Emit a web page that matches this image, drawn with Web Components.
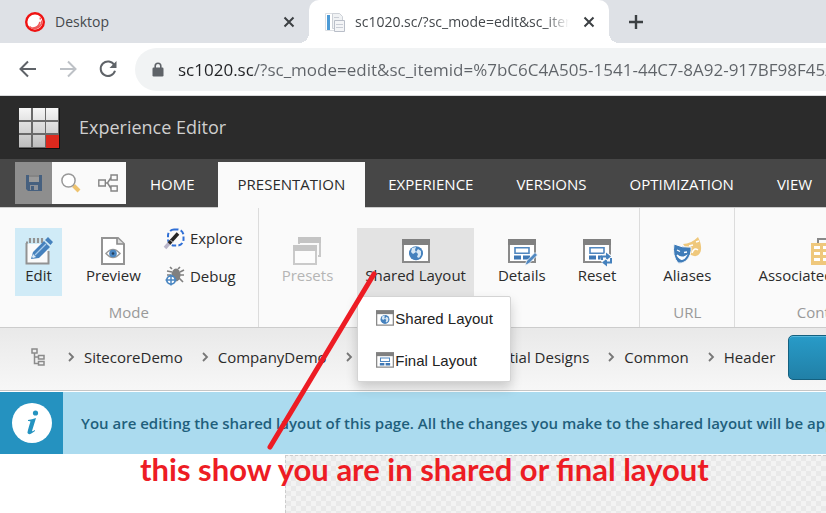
<!DOCTYPE html>
<html lang="en">
<head>
<meta charset="utf-8">
<title>Experience Editor</title>
<style>
  html, body { margin: 0; }
  body { font-family: "Open Sans", "Noto Sans", sans-serif; font-size: 15px; color: #2b2b2b; background: #fff; }
</style>
</head>
<body>
<editor-window></editor-window>

<script>
const define = (name, html, setup) => {
  const template = document.createElement('template');
  template.innerHTML = html;
  customElements.define(name, class extends HTMLElement {
    connectedCallback() {
      if (this.shadowRoot) return;
      this.attachShadow({ mode: 'open' }).append(template.content.cloneNode(true));
      if (setup) setup(this, this.shadowRoot);
    }
  });
};

const windowFrame = '<path fill="#fff" stroke="#8a8a8a" stroke-width="2" d="M1 3h26v22H1z"/><path fill="#808080" d="M0 2h28v6H0z"/>';
const layoutBlocks = '<path fill="#fff" stroke="#4f86bf" stroke-width="1.6" d="M7 10.8h14v5.4H7z"/><path fill="#3f78b5" d="M6 18.5h7v4H6zm9 0h7v4h-7z"/>';

const ICONS = {
  sitecore: ['0 0 20 20', '<circle cx="10" cy="10" r="8.800" fill="#fff" stroke="#ef1212" stroke-width="2.400"/><path d="M16.600 8.500a6.800 6.800 0 0 1-9.200 7.400c4 .3 7-2.400 7.500-6M15.300 5.500v2M4.500 14.500c1 1 2 1.800 4 1.900" fill="none" stroke="#f05a5a" stroke-width="1.500"/>'],
  pages: ['0 0 20 20', '<path fill="#fff" stroke="#dcdfe3" d="M.5 1.500h14v17H.5z"/><path fill="#4d9bd6" d="M2 3h3v15H2z"/><path fill="#f0f2f4" stroke="#cdd1d7" d="M7.500 1.500h7l3 3v12h-10z"/><path fill="#f4f5f7" stroke="#b9bec8" d="M9.500 8.500h10v11h-10z"/><path stroke="#c9cdd5" d="M9 5.500h5M11 12.500h7M11 15.500h7"/>'],
  close: ['0 0 12 12', '<path d="M1.500 1.500l9 9m0-9l-9 9" stroke="#3c4043" stroke-width="2" fill="none"/>'],
  plus: ['0 0 16 16', '<path d="M8 1v14M1 8h14" stroke="#3c4043" stroke-width="2.400" fill="none"/>'],
  back: ['0 0 18 18', '<path d="M17 9H2m7-7.500L1.500 9 9 16.500" stroke="#5f6368" stroke-width="2" fill="none"/>'],
  forward: ['0 0 18 18', '<path d="M1 9h15M9 1.500L16.500 9 9 16.500" stroke="#bdc1c6" stroke-width="2" fill="none"/>'],
  reload: ['0 0 18 18', '<path d="M15.300 5A7.300 7.300 0 1 0 16 10.800" stroke="#5f6368" stroke-width="2" fill="none"/><path d="M17.500 1v7h-7z" fill="#5f6368"/>'],
  lock: ['0 0 12 15', '<path d="M3.200 6V4a2.800 2.800 0 0 1 5.600 0v2" stroke="#5f6368" stroke-width="1.600" fill="none"/><rect x=".5" y="5.500" width="11" height="9" rx="1.200" fill="#5f6368"/>'],
  logo: ['0 0 42 42', '<defs><linearGradient id="g" x2="0" y2="1"><stop stop-color="#f6f6f6"/><stop offset="1" stop-color="#bdbdbd"/></linearGradient></defs><path fill="#111" d="M1 1h41v41H1z"/><path fill="#6a6a6a" d="M1 1h40v40H1z"/><path fill="url(#g)" d="M1 1h12v12H1zm14 0h12v12H15zm13 0h12v12H28zM1 15h12v11H1zm14 0h12v11H15zm13 0h12v11H28zM1 28h12v12H1zm14 0h12v12H15z"/><path fill="#dc291e" d="M28 28h13v13H28z"/>'],
  save: ['0 0 16 16', '<path fill="#46607f" d="M1 0h2v7h10V0h3v16H2l-2-2V0z"/><path fill="#9a9a9a" d="M3 0h10v7H3z"/><path stroke="#6e6e6e" d="M3 1h10"/><path fill="#8e9299" d="M4 10h8v5H4z"/><path fill="#46607f" d="M5 11h3v4H5z"/>'],
  search: ['0 0 20 20', '<path d="M12.500 12.500l5.500 5.500" stroke="#eec36f" stroke-width="4"/><circle cx="7.500" cy="7.500" r="6.600" fill="#fff" stroke="#999" stroke-width="1.500"/>'],
  flow: ['0 0 20 18', '<path d="M.8 6h6.500v6H.8zM13 1h6.200v5H13zm0 11h6.200v5H13zM7.500 9h2L13 3.500M9.500 9l3.500 5.500" fill="none" stroke="#858585" stroke-width="1.400"/>'],
  edit: ['0 0 28 28', '<path fill="#fafafa" d="M2 7h21v19H2z"/><path d="M1.500 6v20.500h22V14" stroke="#929292" stroke-width="2" fill="none"/><path d="M1 5.500h2" stroke="#929292" stroke-width="2"/><path d="M5 1v5m4-5v5m4-5v5m4-5v5" stroke="#929292" stroke-width="2.200"/><path fill="#4581bd" d="M6 22l2-7L19 4l6 6-11 11zM20 3l3-3 5 5-2.500 3z"/><path d="M10 18L21 7" stroke="#a9cbea" stroke-width="1.200"/><path fill="#dcebf7" d="M8 17l3 3-3 1-1-1z"/>'],
  preview: ['0 0 28 28', '<path d="M3 1h16l6 6v20H3z" fill="#fff" stroke="#949494" stroke-width="2"/><path d="M18 1v6h7" fill="#ddd" stroke="#8a8a8a" stroke-width="1.600"/><path d="M7 16.500q7-8 14 0-7 8-14 0z" fill="#fff" stroke="#999" stroke-width="1.500"/><circle cx="14" cy="16.500" r="3.800" fill="#4b87c2"/><circle cx="14" cy="16.500" r="1.300" fill="#263f5b"/>'],
  explore: ['0 0 20 20', '<rect x="3" y="1.500" width="15.500" height="16" rx="6" fill="none" stroke="#2f6fd6" stroke-width="2" stroke-dasharray="4.500 2.300"/><path d="M0 20L7 12" stroke="#b9b5c9" stroke-width="3.500"/><path d="M4 15.500L13 5.500" stroke="#252525" stroke-width="3.500"/><path d="M5.500 12l3 3" stroke="#ddd" stroke-width="1"/>'],
  debug: ['0 0 20 20', '<ellipse cx="11" cy="9" rx="4.500" ry="6.500" fill="#808080"/><path d="M7 3L5 1m8 2l2-2M7 6L2 5m13 1l4-2M15 9h4m-5 3l4 4M6 9H2" stroke="#808080" stroke-width="1.700"/><circle cx="6" cy="14" r="4.200" fill="#fff" stroke="#4b87c2" stroke-width="1.800"/><path d="M6 8.500v11M.5 14h11" stroke="#4b87c2" stroke-width="1.500"/>'],
  presets: ['0 0 28 28', '<path fill="#fafafa" stroke="#c9c9c9" stroke-width="2" d="M6 1h21v18H6z"/><path fill="#c4c4c4" d="M5 0h23v6H5z"/><path fill="#fafafa" stroke="#fafafa" stroke-width="4" d="M1 9h22v18H1z"/><path fill="#fcfcfc" stroke="#cacaca" stroke-width="2" d="M1 9h22v18H1z"/><path fill="#c6c6c6" d="M0 8h24v6H0z"/>'],
  shared: ['0 0 28 28', windowFrame + '<circle cx="14" cy="16.200" r="7" fill="#4581bd"/><path fill="#d7e7f4" d="M10 11l4-1-1 3 1 2-3 2-2-2zm6 1l3 2v4l-2 3-2-1 1-3-2-2z"/>'],
  final: ['0 0 28 28', windowFrame + layoutBlocks],
  details: ['0 0 28 28', windowFrame + layoutBlocks + '<path d="M17 28.500l1.500-4.500 8.500-8.500 2.500 2.500-8.500 8.500z" fill="#5289c1" stroke="#fafafa" stroke-width=".8"/>'],
  reset: ['0 0 28 28', windowFrame + layoutBlocks + '<circle cx="23.500" cy="22" r="6" fill="#fafafa"/><path d="M19 23v-3.500h5M28 21v4.500h-5" fill="none" stroke="#4581bd" stroke-width="2"/><path fill="#4581bd" d="M23 15.500l5 4-5 4zM24 21.500l-5 4 5 4z"/>'],
  aliases: ['0 0 28 28', '<path fill="#efc87c" d="M10 7q8 0 15-7 5 10 2 16-3 5-9 2z"/><path d="M16 9l4-1m3-3l3-1M19 16q2-6 6-3" stroke="#fff" stroke-width="1.500" fill="none"/><path fill="#3f7cb9" stroke="#fafafa" d="M1 7q8 4 17 3 1 8-5 14-4 3-8 2Q-1 19 1 7z"/><path d="M4 13l3 1.500m4 1l3-.5M4 18q4 4 9 1-4 7-9-1z" stroke="#fff" stroke-width="1.300" fill="#fff"/>'],
  associated: ['0 0 28 28', '<path d="M7 6V2h14v4" fill="none" stroke="#888" stroke-width="2"/><path fill="#efc87c" d="M0 6h28v22H0z"/><path fill="#fff" d="M3 9h6v3H3zm0 6h6v3H3zm0 6h6v3H3zM12 9h12v3H12zm0 6h12v3H12zm0 6h12v3H12z"/>'],
  tree: ['0 0 14 18', '<path d="M1 1h5v4H1zm6.500 6.500H13v3.500H7.500zm0 6H13V17H7.500zM3.500 5v10.500h4M3.500 9h4" fill="none" stroke="#8b8b8b" stroke-width="1.500"/>'],
  chevron: ['0 0 6 8', '<path d="M1 0l4 4-4 4" fill="none" stroke="#777" stroke-width="1.800"/>'],
  info: ['0 0 40 40', '<circle cx="20" cy="20" r="20" fill="#fff"/><circle cx="23.500" cy="10" r="2.600" fill="#2493c0"/><path fill="#2493c0" d="M16 17q4-.5 8-2l-4 13q-.2 1 3-1v1q-6 5-7.500 2-.3-1 3-11.500-.5-.7-2.500-.5z"/>']
};

define('ui-icon', `
<style>
  :host { display: inline-block; flex: none; width: var(--icon-w, 28px); height: var(--icon-h, var(--icon-w, 28px)); }
  svg { display: block; width: 100%; height: 100%; overflow: visible; }
</style>
<svg aria-hidden="true"></svg>`, (host, root) => {
  const [box, shapes] = ICONS[host.getAttribute('name')];
  const svg = root.querySelector('svg');
  svg.setAttribute('viewBox', box);
  svg.innerHTML = shapes;
});

define('browser-tab', `
<style>
  :host { display: flex; align-items: center; flex: none; box-sizing: border-box; width: 300px; height: 43px; padding: 0 10px 0 16px; gap: 10px; position: relative; color: #45494d; font-size: 14px; }
  :host([active]) { background: #fff; border-radius: 10px 10px 0 0; }
  :host([active])::before, :host([active])::after { content: ""; position: absolute; bottom: 0; width: 10px; height: 10px; }
  :host([active])::before { right: 100%; background: radial-gradient(circle at 0 0, transparent 10px, #fff 10px); }
  :host([active])::after { left: 100%; background: radial-gradient(circle at 100% 0, transparent 10px, #fff 10px); }
  ::slotted(ui-icon) { --icon-w: 20px; }
  .title { flex: 1; overflow: hidden; white-space: nowrap; line-height: 20px; }
  :host([active]) .title { -webkit-mask-image: linear-gradient(to left, transparent, #000 24px); }
  button { border: 0; padding: 4px; margin: 0; background: none; line-height: 0; --icon-w: 12px; }
</style>
<slot name="icon"></slot><span class="title"><slot></slot></span>
<button aria-label="Close tab"><ui-icon name="close"></ui-icon></button>`);

define('tab-strip', `
<style>
  :host { display: flex; background: #dee1e6; height: 43px; padding-left: 9px; overflow: hidden; }
  button { border: 0; margin: 0; padding: 0 19px; background: none; line-height: 0; --icon-w: 16px; }
</style>
<slot></slot><button aria-label="New tab"><ui-icon name="plus"></ui-icon></button>`);

define('address-bar', `
<style>
  :host { display: flex; align-items: center; height: 52px; background: #fff; border-bottom: 1px solid #d9dadc; padding-left: 8px; overflow: hidden; }
  button { border: 0; margin: 0; padding: 0; width: 40px; height: 40px; display: grid; place-items: center; background: none; --icon-w: 18px; flex: none; }
  label { flex: 1; display: flex; align-items: center; gap: 14px; min-width: 0; height: 43px; margin-left: 7px; padding-left: 17px; background: #f1f3f4; border-radius: 22px 0 0 22px; }
  label ui-icon { --icon-w: 12px; --icon-h: 15px; }
  input { flex: 1; min-width: 0; border: 0; padding: 0; outline: 0; height: 28px; font: 17px "Open Sans", sans-serif; color: #5f6368;
    background: linear-gradient(to right, #202124 75px, #5f6368 75px); -webkit-background-clip: text; background-clip: text; -webkit-text-fill-color: transparent; }
</style>
<button aria-label="Back"><ui-icon name="back"></ui-icon></button>
<button aria-label="Forward"><ui-icon name="forward"></ui-icon></button>
<button aria-label="Reload"><ui-icon name="reload"></ui-icon></button>
<label><ui-icon name="lock"></ui-icon><input type="text" aria-label="Address" value="sc1020.sc/?sc_mode=edit&amp;sc_itemid=%7bC6C4A505-1541-44C7-8A92-917BF98F45A"></label>`);

define('app-header', `
<style>
  :host { display: flex; align-items: center; gap: 19px; height: 63px; padding-left: 18px; background: #2b2b2b; color: #cfcfcf; font-size: 18px; line-height: 24px; --icon-w: 42px; }
  span { padding-bottom: 2px; }
</style>
<ui-icon name="logo"></ui-icon><span><slot></slot></span>`);

define('quick-bar', `
<style>
  :host { display: flex; flex: none; margin: 3px 1px 3px 15px; background: #fafafa; }
  button { width: 37px; height: 42px; border: 0; padding: 0; margin: 0; background: none; display: grid; place-items: center; --icon-w: 20px; --icon-h: 20px; }
  button:first-of-type { background: #8e8e8e; --icon-w: 16px; --icon-h: 16px; }
</style>
<button aria-label="Save"><ui-icon name="save"></ui-icon></button>
<button aria-label="Search"><ui-icon name="search"></ui-icon></button>
<button aria-label="Workflow"><ui-icon name="flow"></ui-icon></button>`);

define('ribbon-tab', `
<style>
  :host { display: flex; flex: none; margin-top: 3px; }
  a { display: flex; align-items: center; padding: 0 20px 2px; color: #fff; text-decoration: none; white-space: nowrap; }
  :host([active]) a { background: #fafafa; color: #2b2b2b; margin-bottom: -1px; }
</style>
<a href="#"><slot></slot></a>`);

define('ribbon-tabs', `
<style>
  :host { display: flex; gap: 3px; height: 48px; background: #474747; border-bottom: 1px solid #ccc; white-space: nowrap; }
</style>
<slot></slot>`);

define('ribbon-chunk', `
<style>
  :host { display: flex; flex-direction: column; flex: none; height: 119px; box-sizing: border-box; padding: 20px 15px 5px; gap: 6px; border-right: 1px solid #dcdcdc; }
  .body { display: flex; gap: 16px; height: 68px; }
  .caption { text-align: center; color: #999; line-height: 20px; height: 20px; }
</style>
<div class="body"><slot></slot></div><div class="caption"></div>`, (host, root) => {
  root.querySelector('.caption').textContent = host.getAttribute('caption') || '';
});

define('ribbon-button', `
<style>
  :host { display: block; position: relative; }
  button { display: flex; flex-direction: column; align-items: center; height: 68px; min-width: 47px; border: 0; margin: 0; padding: 9px 8px; background: none; font: inherit; line-height: 20px; color: #2b2b2b; white-space: nowrap; }
  :host([selected]) button { background: #d0ebf7; }
  :host([open]) button { background: #e3e3e3; }
  button:disabled { color: #b5b5b5; }
  :host([small]) button { flex-direction: row; gap: 5px; height: 20px; padding: 0; --icon-w: 20px; }
</style>
<button><span class="icon"></span><span><slot></slot></span></button><slot name="menu"></slot>`, (host, root) => {
  const icon = document.createElement('ui-icon');
  icon.setAttribute('name', host.getAttribute('icon'));
  root.querySelector('.icon').replaceWith(icon);
  root.querySelector('button').disabled = host.hasAttribute('disabled');
});

define('button-stack', `
<style>
  :host { display: flex; flex-direction: column; gap: 18px; }
</style><slot></slot>`);

define('drop-menu', `
<style>
  :host { position: absolute; z-index: 2; top: 100%; left: 0; display: block; box-sizing: border-box; padding: 0 17px 0 18px; background: #fff; border: 1px solid #d4d4d4; border-radius: 2px; box-shadow: 0 6px 12px rgba(0,0,0,.18); }
</style><slot></slot>`);

define('menu-item', `
<style>
  :host { display: block; }
  button { display: flex; align-items: center; height: 42px; width: 100%; border: 0; margin: 0; padding: 0; gap: 1px; background: none; font: 15px "Liberation Sans", Arial, sans-serif; color: #222; white-space: nowrap; --icon-w: 18px; }
</style>
<button role="menuitem"><slot name="icon"></slot><span><slot></slot></span></button>`);

define('ribbon-panel', `
<style>
  :host { display: flex; background: #fafafa; border-bottom: 1px solid #ccc; }
</style><slot></slot>`);

define('bread-crumb', `
<style>
  :host { display: flex; align-items: center; gap: 10px; flex: none; }
  ui-icon { --icon-w: 6px; --icon-h: 8px; }
  a { color: #2b2b2b; text-decoration: none; white-space: nowrap; }
</style><ui-icon name="chevron"></ui-icon><a href="#"><slot></slot></a>`);

define('bread-crumbs', `
<style>
  :host { display: flex; align-items: center; gap: 19px; box-sizing: border-box; height: 63px; padding: 0 0 4px 31px; border-bottom: 1px solid #c6c6c6; background: linear-gradient(#e9e9e9, #f7f7f7); }
  nav { display: contents; }
  nav > ui-icon { --icon-w: 14px; --icon-h: 18px; margin-right: 4px; }
  .go { flex: none; box-sizing: border-box; width: 90px; height: 45px; margin: 0 0 0 -6px; border: 1px solid #14607f; border-radius: 5px; background: linear-gradient(#289bc8, #2180a7); box-shadow: inset 0 1px #58b8dc; }
</style>
<nav aria-label="Breadcrumb"><ui-icon name="tree"></ui-icon><slot></slot></nav><button class="go" aria-label="Go"></button>`);

define('info-bar', `
<style>
  :host { display: flex; align-items: stretch; height: 62px; margin-top: 1px; background: #abdbef; color: #1f5f7c; font-weight: 600; }
  .badge { flex: none; width: 63px; display: grid; place-items: center; background: #2592c0; --icon-w: 40px; }
  p { margin: 0 0 0 18px; align-self: center; white-space: nowrap; }
</style>
<div class="badge"><ui-icon name="info"></ui-icon></div><p><slot></slot></p>`);

define('page-canvas', `
<style>
  :host { display: flex; flex: 1; min-height: 40px; background: #fff; }
  .blank { flex: none; width: 285px; }
  .grid { flex: 1; margin-top: 1px; border: 1px dashed #ccc; border-width: 1px 0 0 1px; background: repeating-conic-gradient(#e9e9e9 0 25%, #f3f3f3 0 50%) 0 0 / 10px 10px; }
</style><div class="blank"></div><div class="grid"></div>`);

define('callout-note', `
<style>
  :host { display: block; position: absolute; left: 140px; top: 273px; z-index: 3; color: #ed1c24; pointer-events: none; }
  svg { display: block; width: 240px; height: 175px; overflow: visible; }
  p { margin: 0; font: bold 31px/42px Lato, "Open Sans", sans-serif; white-space: nowrap; }
</style>
<svg aria-hidden="true"><path d="M130 174L234 1" stroke="currentColor" stroke-width="5" stroke-linecap="round"/></svg>
<p><slot></slot></p>`);

define('editor-window', `
<style>
  :host { display: flex; flex-direction: column; position: relative; min-height: 100vh; overflow: hidden; }
</style>
<tab-strip>
  <browser-tab><ui-icon slot="icon" name="sitecore"></ui-icon>Desktop</browser-tab>
  <browser-tab active><ui-icon slot="icon" name="pages"></ui-icon>sc1020.sc/?sc_mode=edit&amp;sc_itemid</browser-tab>
</tab-strip>
<address-bar></address-bar>
<app-header>Experience Editor</app-header>
<ribbon-tabs>
  <quick-bar></quick-bar>
  <ribbon-tab>HOME</ribbon-tab>
  <ribbon-tab active>PRESENTATION</ribbon-tab>
  <ribbon-tab>EXPERIENCE</ribbon-tab>
  <ribbon-tab>VERSIONS</ribbon-tab>
  <ribbon-tab>OPTIMIZATION</ribbon-tab>
  <ribbon-tab>VIEW</ribbon-tab>
</ribbon-tabs>
<ribbon-panel>
  <ribbon-chunk caption="Mode">
    <ribbon-button icon="edit" selected>Edit</ribbon-button>
    <ribbon-button icon="preview">Preview</ribbon-button>
    <button-stack>
      <ribbon-button icon="explore" small>Explore</ribbon-button>
      <ribbon-button icon="debug" small>Debug</ribbon-button>
    </button-stack>
  </ribbon-chunk>
  <ribbon-chunk>
    <ribbon-button icon="presets" disabled>Presets</ribbon-button>
    <ribbon-button icon="shared" open>Shared Layout
      <drop-menu slot="menu" role="menu">
        <menu-item><ui-icon slot="icon" name="shared"></ui-icon>Shared Layout</menu-item>
        <menu-item><ui-icon slot="icon" name="final"></ui-icon>Final Layout</menu-item>
      </drop-menu>
    </ribbon-button>
    <ribbon-button icon="details">Details</ribbon-button>
    <ribbon-button icon="reset">Reset</ribbon-button>
  </ribbon-chunk>
  <ribbon-chunk caption="URL">
    <ribbon-button icon="aliases">Aliases</ribbon-button>
  </ribbon-chunk>
  <ribbon-chunk caption="Content">
    <ribbon-button icon="associated">Associated content</ribbon-button>
  </ribbon-chunk>
</ribbon-panel>
<bread-crumbs>
  <bread-crumb>SitecoreDemo</bread-crumb>
  <bread-crumb>CompanyDemo</bread-crumb>
  <bread-crumb>Presentation</bread-crumb>
  <bread-crumb>Partial Designs</bread-crumb>
  <bread-crumb>Common</bread-crumb>
  <bread-crumb>Header</bread-crumb>
</bread-crumbs>
<info-bar>You are editing the shared layout of this page. All the changes you make to the shared layout will be applied</info-bar>
<page-canvas></page-canvas>
<callout-note>this show you are in shared or final layout</callout-note>`);
</script>
</body>
</html>
